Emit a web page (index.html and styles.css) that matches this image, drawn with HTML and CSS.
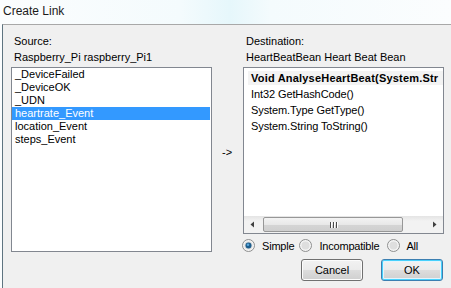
FILE: index.html
```html
<html>
  <head>
    <link rel="stylesheet" href="styles.css">
  </head>
  <body>
    <div class="titlebar">Create Link</div>

    <div class="frame">
      <!-- Source side -->
      <div class="column source">
        <label>Source:</label>
        <label>Raspberry_Pi raspberry_Pi1</label>
        <div class="listbox source-list">
          <div class="item">_DeviceFailed</div>
          <div class="item">_DeviceOK</div>
          <div class="item">_UDN</div>
          <div class="item selected">heartrate_Event</div>
          <div class="item">location_Event</div>
          <div class="item">steps_Event</div>
        </div>
      </div>

      <div class="arrow">-&gt;</div>

      <!-- Destination side -->
      <div class="column destination">
        <label>Destination:</label>
        <label>HeartBeatBean Heart Beat Bean</label>
        <div class="listbox dest-list">
          <div class="dest-items">
            <div class="method current">Void AnalyseHeartBeat(System.Str</div>
            <div class="method">Int32 GetHashCode()</div>
            <div class="method">System.Type GetType()</div>
            <div class="method">System.String ToString()</div>
          </div>
          <div class="hscroll">
            <svg class="scroll-arrow" width="7" height="7" viewBox="0 0 7 7"><path d="M5 0.5 L1.5 3.5 L5 6.5 Z" fill="#404040"/></svg>
            <div class="thumb">
              <span class="grip"></span><span class="grip"></span><span class="grip"></span>
            </div>
            <svg class="scroll-arrow" width="7" height="7" viewBox="0 0 7 7"><path d="M2 0.5 L5.5 3.5 L2 6.5 Z" fill="#404040"/></svg>
          </div>
        </div>

        <div class="radios">
          <div class="radio">
            <svg width="13" height="13" viewBox="0 0 13 13">
              <circle cx="6.5" cy="6.5" r="6" fill="#f4f4f4" stroke="#8e8f8f"/>
              <circle cx="6.5" cy="6.5" r="4" fill="#dcdcdc"/>
              <circle cx="6.5" cy="6.5" r="3" fill="#1d5d8c"/>
              <circle cx="6" cy="5.8" r="1.3" fill="#5aa7db"/>
            </svg>
            <span>Simple</span>
          </div>
          <div class="radio">
            <svg width="13" height="13" viewBox="0 0 13 13">
              <circle cx="6.5" cy="6.5" r="6" fill="#f4f4f4" stroke="#8e8f8f"/>
              <circle cx="6.5" cy="6.5" r="4" fill="#dedede"/>
            </svg>
            <span>Incompatible</span>
          </div>
          <div class="radio">
            <svg width="13" height="13" viewBox="0 0 13 13">
              <circle cx="6.5" cy="6.5" r="6" fill="#f4f4f4" stroke="#8e8f8f"/>
              <circle cx="6.5" cy="6.5" r="4" fill="#dedede"/>
            </svg>
            <span>All</span>
          </div>
        </div>

        <div class="buttons">
          <button class="button">Cancel</button>
          <button class="button default">OK</button>
        </div>
      </div>
    </div>
  </body>
</html>
```

FILE: styles.css
```css
* {
  box-sizing: border-box;
  margin: 0;
  padding: 0;
}

body {
  width: 451px;
  height: 288px;
  overflow: hidden;
  background: linear-gradient(90deg, #fbfdfe 0%, #f4fbfd 40%, #e6f7fb 51%, #f4fbfd 60%, #fbfdfe 100%);
  font-family: 'Liberation Sans', Arial, sans-serif;
  font-size: 11px;
  color: #000;
}

.titlebar {
  height: 24px;
  padding: 4px 0 0 3px;
  font-size: 12px;
  line-height: 14px;
  color: #1a1a1a;
}

.frame {
  display: flex;
  height: 264px;
  margin-left: 2px;
  padding: 8px 0 0 8px;
  background: #f0f0f0;
  border-left: 1px solid #5e7480;
  border-top: 1px solid #a8a8a8;
}

.column {
  display: flex;
  flex-direction: column;
  width: 201px;
}

label {
  display: block;
  padding-left: 3px;
  line-height: 16px;
  white-space: nowrap;
}

.listbox {
  margin-top: 2px;
  background: #fff;
  border: 1px solid #828790;
  overflow: hidden;
}

.source-list {
  height: 185px;
}

.item {
  height: 13px;
  padding-left: 3px;
  line-height: 13px;
  margin-right: 1px;
  white-space: nowrap;
}

.item.selected {
  background: #3399ff;
  color: #fff;
}

.arrow {
  width: 31px;
  padding-top: 113px;
  padding-left: 10px;
  font-size: 11px;
}

.dest-list {
  display: flex;
  flex-direction: column;
  height: 167px;
}

.dest-items {
  flex: 1;
  padding: 3px 0 0 4px;
}

.method {
  height: 16px;
  padding-left: 3px;
  line-height: 16px;
  white-space: nowrap;
  letter-spacing: -0.1px;
}

.method.current {
  height: 14px;
  line-height: 14px;
  margin-bottom: 1px;
  background: #f3f3f3;
  font-weight: bold;
  letter-spacing: 0.2px;
  overflow: hidden;
}

.hscroll {
  display: flex;
  align-items: center;
  height: 17px;
  background: linear-gradient(180deg, #e4e4e4 0%, #f2f2f2 30%, #f2f2f2 100%);
}

.scroll-arrow {
  flex: none;
  margin: 0 5px;
}

.thumb {
  display: flex;
  justify-content: center;
  align-items: center;
  gap: 2px;
  width: 140px;
  height: 15px;
  margin: 0 auto 0 2px;
  border: 1px solid #979797;
  border-radius: 2px;
  background: linear-gradient(180deg, #f3f3f3 0%, #e8e8e8 50%, #d5d5d5 51%, #cfcfcf 100%);
}

.hscroll .scroll-arrow:last-child {
  margin-left: 10px;
}

.grip {
  width: 1px;
  height: 6px;
  background: #4a4a4a;
  box-shadow: 1px 0 0 #fff;
}

.radios {
  display: flex;
  align-items: center;
  height: 22px;
  padding-top: 1px;
  margin-left: -1px;
  letter-spacing: -0.2px;
}

.radio {
  display: flex;
  align-items: center;
  gap: 7px;
  margin-right: 5px;
}

.radio:nth-child(2) {
  margin-right: 8px;
}

.radio:nth-child(3) {
  gap: 6px;
}

.radio svg {
  flex: none;
}

.buttons {
  display: flex;
  justify-content: flex-end;
  gap: 18px;
  margin-top: 3px;
  padding-right: 1px;
}

.button {
  width: 62px;
  height: 22px;
  border: 1px solid #707070;
  border-radius: 3px;
  background: linear-gradient(180deg, #f2f2f2 0%, #ebebeb 50%, #dddddd 51%, #cfcfcf 100%);
  box-shadow: inset 0 0 0 1px #fcfcfc;
  font-family: 'Liberation Sans', Arial, sans-serif;
  font-size: 11px;
  color: #000;
  outline: none;
}

.button.default {
  border-color: #3c7fb1;
  box-shadow: inset 0 0 0 1px #48d1fc, inset 0 0 0 2px #e3f4fc;
}
```
